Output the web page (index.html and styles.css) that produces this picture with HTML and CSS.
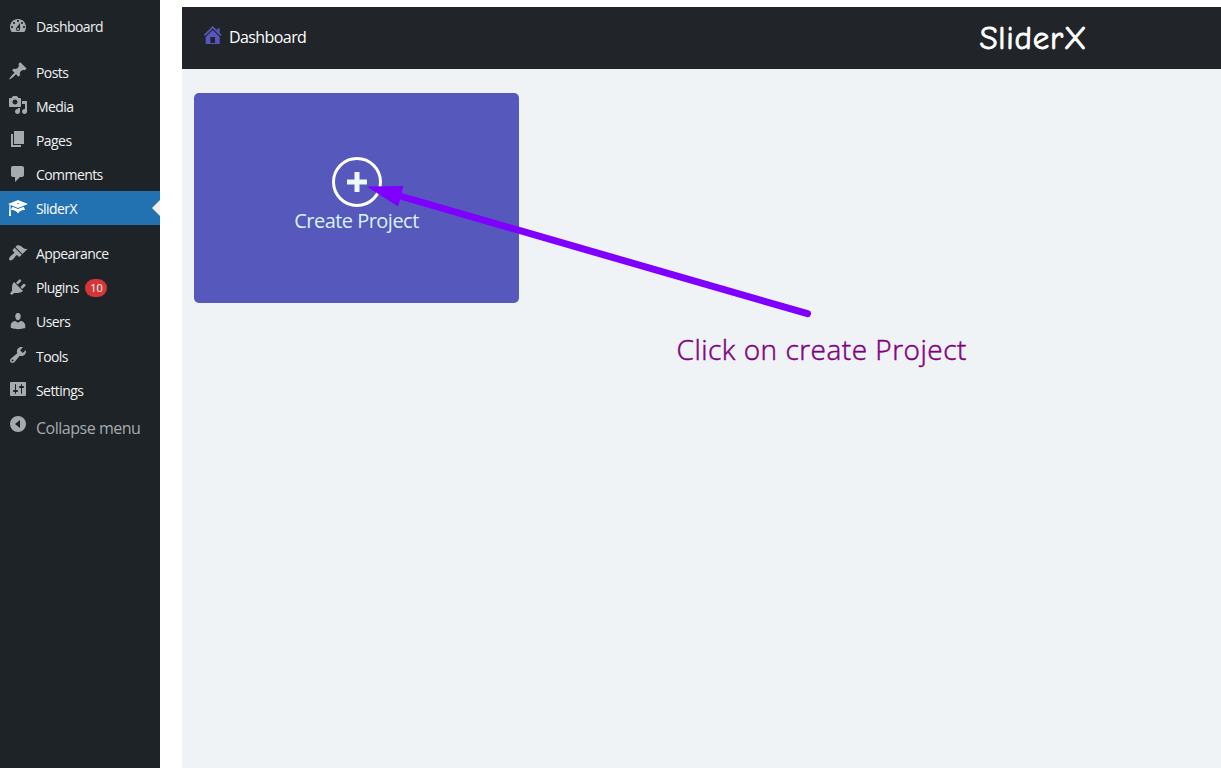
FILE: index.html
```html
<!DOCTYPE html>
<html lang="en">
<head>
<meta charset="utf-8">
<title>SliderX</title>
<link rel="stylesheet" href="styles.css">
</head>
<body>
<div class="app">
  <nav class="sidebar">
    <a class="item"><svg class="icon" viewBox="0 0 20 20"><path d="M3.76 16h12.48c1.1-1.37 1.76-3.11 1.76-5 0-4.42-3.58-8-8-8s-8 3.58-8 8c0 1.89.66 3.63 1.76 5zM10 4c.55 0 1 .45 1 1s-.45 1-1 1-1-.45-1-1 .45-1 1-1zM6 6c.55 0 1 .45 1 1s-.45 1-1 1-1-.45-1-1 .45-1 1-1zm8 0c.55 0 1 .45 1 1s-.45 1-1 1-1-.45-1-1 .45-1 1-1zm-5.37 5.55L12 7v6c0 1.1-.9 2-2 2s-2-.9-2-2c0-.57.24-1.08.63-1.45zM4 10c.55 0 1 .45 1 1s-.45 1-1 1-1-.45-1-1 .45-1 1-1zm12 0c.55 0 1 .45 1 1s-.45 1-1 1-1-.45-1-1 .45-1 1-1zm-5 3c0-.55-.45-1-1-1s-1 .45-1 1 .45 1 1 1 1-.45 1-1z"/></svg><span>Dashboard</span></a>
    <div class="gap"></div>
    <a class="item"><svg class="icon" viewBox="0 0 20 20"><path d="M10.44 3.02l1.82-1.82 6.36 6.35-1.83 1.82c-1.05-.68-2.48-.57-3.41.36l-.75.75c-.92.93-1.04 2.35-.35 3.41l-1.83 1.82-2.41-2.41-2.8 2.79c-.42.42-3.38 2.71-3.8 2.29s1.86-3.39 2.28-3.81l2.79-2.79L4.1 9.36l1.83-1.82c1.05.69 2.48.57 3.4-.36l.75-.75c.93-.92 1.05-2.35.36-3.41z"/></svg><span>Posts</span></a>
    <a class="item"><svg class="icon" viewBox="0 0 20 20"><path d="M13 11V4c0-.55-.45-1-1-1h-1.67L9 1H5L3.67 3H2c-.55 0-1 .45-1 1v7c0 .55.45 1 1 1h10c.55 0 1-.45 1-1zM7 4.5c1.38 0 2.5 1.12 2.5 2.5S8.38 9.5 7 9.5 4.5 8.38 4.5 7 5.62 4.5 7 4.5zM14 6h5v10.5c0 1.38-1.12 2.5-2.5 2.5S14 17.88 14 16.5s1.12-2.5 2.5-2.5c.17 0 .34.02.5.05V9h-3V6zm-4 8.05V13h2v3.5c0 1.38-1.12 2.5-2.5 2.5S7 17.88 7 16.5 8.12 14 9.5 14c.17 0 .34.02.5.05z"/></svg><span>Media</span></a>
    <a class="item"><svg class="icon" viewBox="0 0 20 20"><path d="M6 15V2h10v13H6zm-1 1h8v2H3V5h2v11z"/></svg><span>Pages</span></a>
    <a class="item"><svg class="icon" viewBox="0 0 20 20"><path d="M5 2h9c1.1 0 2 .9 2 2v7c0 1.1-.9 2-2 2h-2l-5 5v-5H5c-1.1 0-2-.9-2-2V4c0-1.1.9-2 2-2z"/></svg><span>Comments</span></a>
    <a class="item active"><svg class="icon" viewBox="0 0 20 20"><path d="M10 10L2.54 7.02 3 18H1l.48-11.41L0 6l10-4 10 4zm0-5c-.55 0-1 .22-1 .5s.45.5 1 .5 1-.22 1-.5-.45-.5-1-.5zm0 6l5.57-2.23c.71.94 1.2 2.07 1.36 3.3-.3-.04-.61-.07-.93-.07-2.55 0-4.78 1.37-6 3.41C8.78 13.37 6.55 12 4 12c-.32 0-.63.03-.93.07.16-1.23.65-2.36 1.36-3.3z"/></svg><span>SliderX</span></a>
    <div class="gap"></div>
    <a class="item"><svg class="icon" viewBox="0 0 20 20"><path d="M14.48 11.06L7.41 3.99l1.5-1.5c.5-.56 2.3-.47 3.51.32 1.21.8 1.43 1.28 2.91 2.1 1.18.64 2.45 1.26 4.45.85zm-.71.71L6.7 4.7 4.93 6.47c-.39.39-.39 1.02 0 1.41l1.06 1.06c.39.39.39 1.03 0 1.42-.6.6-1.43 1.11-2.21 1.69-.35.26-.7.53-1.01.84C1.43 14.23.4 16.08 1.4 17.07c.99 1 2.84-.03 4.18-1.36.31-.31.58-.66.85-1.02.57-.78 1.08-1.61 1.69-2.21.39-.39 1.02-.39 1.41 0l1.06 1.06c.39.39 1.02.39 1.41 0z"/></svg><span>Appearance</span></a>
    <a class="item"><svg class="icon" viewBox="0 0 20 20"><path d="M13.11 4.36L9.87 7.6 8 5.73l3.24-3.24c.35-.34 1.05-.2 1.56.32.52.51.66 1.21.31 1.55zm-8 1.77l.91-1.12 9.01 9.01-1.19.84c-.71.71-2.63 1.16-3.82 1.16H6.14L4.9 17.26c-.59.59-1.54.59-2.12 0-.59-.58-.59-1.53 0-2.12l1.24-1.24v-3.88c0-1.13.4-3.19 1.09-3.89zm7.26 3.97l3.24-3.24c.34-.35 1.04-.21 1.55.31.52.51.66 1.21.31 1.55l-3.24 3.25z"/></svg><span>Plugins</span><b class="count">10</b></a>
    <a class="item"><svg class="icon" viewBox="0 0 20 20"><path d="M10 9.25c-2.27 0-2.73-3.44-2.73-3.44C7 4.02 7.82 2 9.97 2c2.16 0 2.98 2.02 2.71 3.81 0 0-.41 3.44-2.68 3.44zm0 2.57L12.72 10c2.39 0 4.52 2.33 4.52 4.53v2.49s-3.65 1.13-7.24 1.13c-3.65 0-7.24-1.13-7.24-1.13v-2.49c0-2.25 1.94-4.48 4.47-4.48z"/></svg><span>Users</span></a>
    <a class="item"><svg class="icon" viewBox="0 0 20 20"><path d="M16.68 9.77c-1.34 1.34-3.3 1.67-4.95.99l-5.41 6.52c-.99.99-2.59.99-3.58 0s-.99-2.59 0-3.57l6.52-5.42c-.68-1.65-.35-3.61.99-4.95 1.28-1.28 3.12-1.62 4.72-1.06l-2.89 2.89 2.82 2.82 2.86-2.87c.53 1.58.18 3.39-1.08 4.65zM3.81 16.21c.4.39 1.04.39 1.43 0 .4-.4.4-1.04 0-1.43-.39-.4-1.03-.4-1.43 0-.39.39-.39 1.03 0 1.43z"/></svg><span>Tools</span></a>
    <a class="item"><svg class="icon" viewBox="0 0 20 20"><path d="M18 16V4c0-.55-.45-1-1-1H3c-.55 0-1 .45-1 1v12c0 .55.45 1 1 1h14c.55 0 1-.45 1-1zM8 11h1c.55 0 1 .45 1 1s-.45 1-1 1H8v1.5c0 .28-.22.5-.5.5s-.5-.22-.5-.5V13H6c-.55 0-1-.45-1-1s.45-1 1-1h1V5.5c0-.28.22-.5.5-.5s.5.22.5.5V11zm5-2h-1c-.55 0-1-.45-1-1s.45-1 1-1h1V5.5c0-.28.22-.5.5-.5s.5.22.5.5V7h1c.55 0 1 .45 1 1s-.45 1-1 1h-1v5.5c0 .28-.22.5-.5.5s-.5-.22-.5-.5V9z"/></svg><span>Settings</span></a>
    <a class="item collapse"><svg class="icon" viewBox="0 0 20 20"><path d="M10 2a8 8 0 1 0 0 16 8 8 0 0 0 0-16zM12 6v8l-5-4z"/></svg><span>Collapse menu</span></a>
  </nav>
  <main class="main">
    <header class="topbar">
      <a class="home"><svg class="home-icon" viewBox="0 0 20 20"><path d="M16 8.5l1.53 1.53-1.06 1.06L10 4.6l-6.47 6.49-1.06-1.06L10 2.5l4 4v-2h2v4zm-6-2.46l6 5.99V18H4v-5.97zM12 17v-5H8v5h4z"/></svg><span>Dashboard</span></a>
      <div class="brand">SliderX</div>
    </header>
    <section class="projects">
      <button class="card">
        <svg class="plus" viewBox="0 0 50 50"><circle cx="25" cy="25" r="23.5"/><path d="M15 25h20M25 15v20"/></svg>
        <span class="card-label">Create Project</span>
      </button>
    </section>
  </main>
  <svg class="arrow" viewBox="0 0 460 140"><path class="shaft" d="M40 16L447.5 133.7"/><path class="head" d="M6.7 6.5L43.5 6L38.2 26.5z"/></svg>
  <p class="hint">Click on create Project</p>
</div>
</body>
</html>
```
FILE: styles.css
```css
* { box-sizing: border-box; }
body { margin: 0; background: #fff; font-family: "Open Sans", "Noto Sans", sans-serif; }
.app { position: relative; display: flex; width: 1221px; height: 768px; overflow: hidden; }
.sidebar { width: 160px; height: 768px; padding-top: 9.3px; background: #1d2327; flex: none; }
.item { position: relative; display: flex; align-items: center; height: 34.15px; padding-left: 8px; color: #f0f0f1; font-size: 14px; letter-spacing: -0.57px; white-space: nowrap; }
.item span { padding-top: 1px; }
.icon { width: 20px; height: 20px; margin: -0.6px 8px 0 0; fill: #a7aaad; fill-rule: evenodd; flex: none; }
.gap { height: 11px; }
.active { background: #2271b1; color: #fff; }
.active .icon { fill: #fff; }
.active::after { content: ""; position: absolute; right: 0; top: 9px; border: 8px solid transparent; border-left: 0; border-right-color: #f0f0f1; }
.count { width: 22px; height: 18px; margin: 1px 0 0 6.5px; border-radius: 9px; background: #d63638; color: #fff; font-size: 11px; font-weight: 400; line-height: 18px; text-align: center; letter-spacing: 0; }
.collapse { height: 41px; color: #a7aaad; font-size: 16px; letter-spacing: -0.48px; }
.collapse .icon { margin-top: -7px; }
.collapse span { padding-top: 2px; }
.main { flex: 1; margin: 7px 0 0 22px; background: #f0f3f6; }
.topbar { display: flex; align-items: center; justify-content: space-between; height: 62px; padding: 0 134px 0 19.2px; background: #212529; color: #fff; }
.home { display: flex; align-items: center; font-size: 16px; letter-spacing: -0.58px; }
.home-icon { width: 23.4px; height: 23.4px; margin: -6px 4.4px 0 0; fill: #5656bb; fill-rule: evenodd; }
.home span { margin-top: -3px; }
.brand { font-family: "Comic Sans MS", "Comic Neue", Lato, sans-serif; font-size: 33px; letter-spacing: 0.7px; -webkit-text-stroke: 0.8px #fff; }
.projects { padding: 24px 12px; }
.card { display: flex; flex-direction: column; align-items: center; width: 325px; height: 210px; padding: 64px 0 0; border: 0; border-radius: 5px; background: #5658bb; font-family: inherit; }
.plus { width: 50px; height: 50px; fill: none; stroke: #fff; stroke-width: 3; }
.plus path { stroke: #f0f8ff; stroke-width: 5; }
.card-label { color: #d8f3ff; font-size: 20px; line-height: 28px; letter-spacing: -0.53px; }
.arrow { position: absolute; left: 360px; top: 180px; width: 460px; height: 140px; }
.shaft { stroke: #7f00ff; stroke-width: 7; stroke-linecap: round; }
.head { fill: #7f00ff; }
.hint { position: absolute; left: 676.5px; top: 329px; margin: 0; color: #800080; font-size: 28px; font-weight: 300; line-height: 40px; letter-spacing: 0.5px; white-space: nowrap; -webkit-text-stroke: 0.5px #800080; }
```
